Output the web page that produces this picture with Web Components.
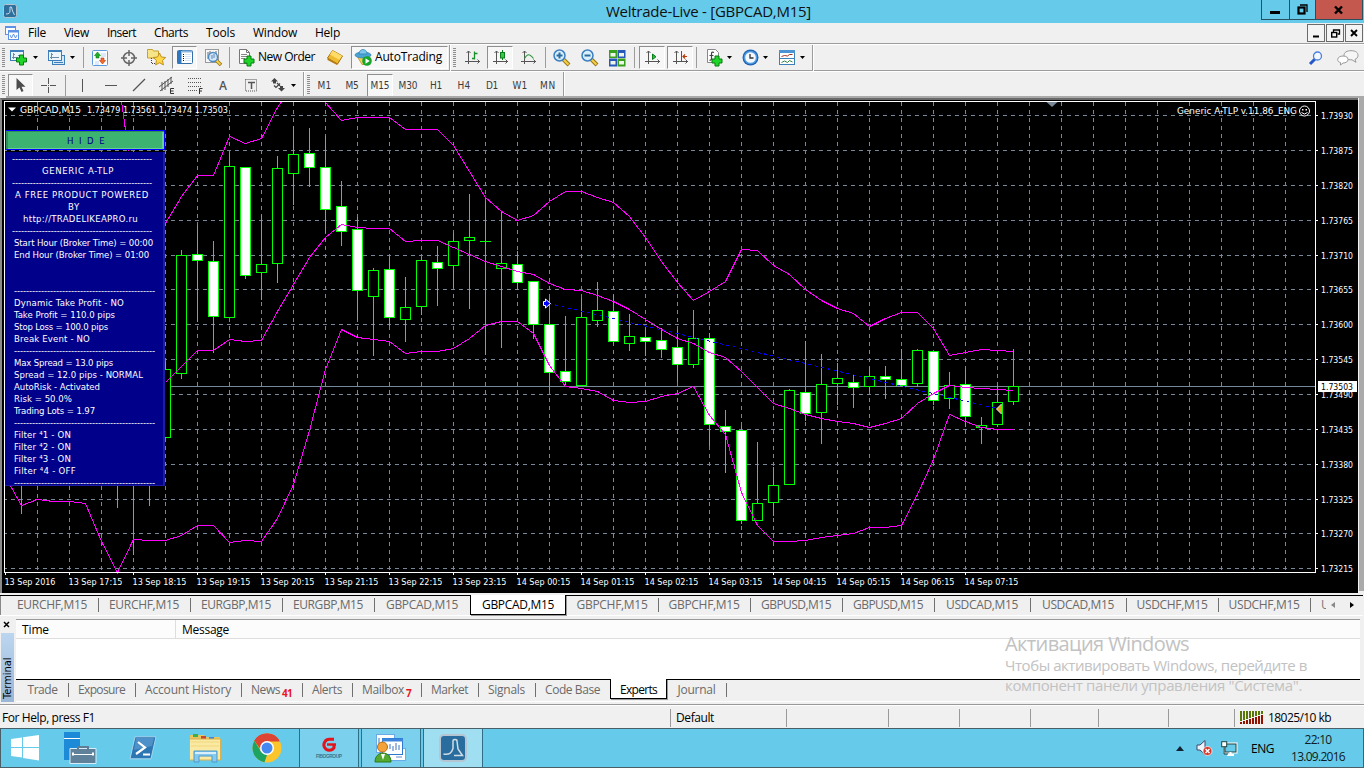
<!DOCTYPE html>
<html lang="en">
<head>
<meta charset="utf-8">
<title>Weltrade-Live - [GBPCAD,M15]</title>
<style>
  html, body { margin: 0; height: 100%; overflow: hidden; }
  body {
    width: 1364px;
    height: 768px;
    background: #f0f0f0;
    color: #000;
    font-family: 'Open Sans', 'Noto Sans', sans-serif;
    font-size: 12px;
  }
</style>
</head>
<body>
<trade-terminal></trade-terminal>

<script>
(function (document, window) {

  const CHART_FONT = "'DejaVu Sans Condensed', 'DejaVu Sans', sans-serif";

  function define(name, css, html, setup) {
    window.customElements.define(name, class extends HTMLElement {
      connectedCallback() {
        if (this.shadowRoot) { return; }
        const root = this.attachShadow({ mode: 'open' });
        const body = typeof html === 'function' ? html(this) : html;
        root.innerHTML = `<style>${css}</style>${body}`;
        if (setup) { setup(this, root); }
      }
    });
  }

  // ---- icons: [width, height, markup] ----
  const axes = '<path d="M3.5 1v13M0 11.500h15M1.500 3l2-2 2 2M12.500 9.500l2 2-2 2" fill="none" stroke="#555"/>';
  const plus = (x, y) => `<path transform="translate(${x} ${y})" d="M3.500 .5h4v3h3v4h-3v3h-4v-3h-3v-4h3z" fill="#1fd428" stroke="#087a10"/>`;
  const lens = sign => `<path d="M10 10l6 6" stroke="#9a7410" stroke-width="4"/><path d="M10 10l5.500 5.500" stroke="#f0ce4a" stroke-width="2.200"/><circle cx="6.500" cy="6.500" r="5.500" fill="#d8effc" stroke="#3b7fc0" stroke-width="1.500"/><path d="${sign}" stroke="#2c6c9c" stroke-width="2"/>`;
  const ICONS = {
    app: [14, 14, '<rect x=".5" y=".5" width="13" height="13" rx="2" fill="#2f6f9c" stroke="#b5c5d0"/><path d="M3 10c3 0 4-1 4-3V3h1.500l1 4 2 4" fill="none" stroke="#c8dcea"/>'],
    doc: [15, 15, '<rect x=".5" y=".5" width="10" height="8" fill="#fff" stroke="#5e92e4"/><path d="M0 1.500h11" stroke="#5e92e4"/><rect x="3.500" y="4.500" width="10" height="9" fill="#fff" stroke="#5e92e4"/><path d="M3 5.500h11" stroke="#5e92e4" stroke-width="2"/><path d="M5 9l1.500 3 2-4 2 4 1.500-3" fill="none" stroke="#5e92e4"/>'],
    newChart: [18, 16, '<rect x=".5" y=".5" width="13" height="10" fill="#eef6fd" stroke="#3c7fba"/><path d="M0 1h14" stroke="#3c7fba" stroke-width="2"/><path d="M3.500 3v6M2 7.500h6M3 4.500h2M8 5.500h3" stroke="#6c8ba6"/>' + plus(6, 4.5)],
    profiles: [18, 16, '<rect x="4.500" y="5.500" width="12" height="9" fill="#d5e8f7" stroke="#3c7fba"/><rect x=".5" y=".5" width="13" height="10" fill="#eef6fd" stroke="#3c7fba"/><path d="M0 1h14" stroke="#3c7fba" stroke-width="2"/><path d="M3.500 3v6M2 7.500h9M3 4.500h2" stroke="#6c8ba6"/><path d="M6 12.500h9" stroke="#3c7fba"/>'],
    market: [16, 16, '<rect x=".5" y=".5" width="15" height="15" rx="1" fill="#fff" stroke="#5a9be0"/><path d="M9 4h5M3 12h4M9 6h5M3 14h4" stroke="#bcd3f2"/><path d="M5.500 2l3 3.500H7V8H4V5.500H2.500z" fill="#1fae28" stroke="#0b7d14" stroke-width=".6"/><path d="M10.500 14l-3-3.500H9V8h3v2.500h1.500z" fill="#f46b2c" stroke="#b8380b" stroke-width=".6"/>'],
    target: [16, 16, '<circle cx="8" cy="8" r="5.500" fill="none" stroke="#666" stroke-width="1.500"/><path d="M8 0v6M8 10v6M0 8h6M10 8h6" stroke="#666" stroke-width="1.500"/>'],
    navigator: [19, 17, '<path d="M.5 2.500v-2h5l1 1.500h5v7h-11z" fill="#f8e488" stroke="#c3a132"/><path d="M4.500 9v6M5 14.500h4" stroke="#444" stroke-dasharray="1 1"/><path d="M12.500 4l1.900 4 4.300.5-3.200 3 .9 4.400-3.900-2.200-3.900 2.200.9-4.400-3.200-3 4.300-.5z" fill="#ffd84a" stroke="#b98812" stroke-width=".9"/>'],
    dataWin: [16, 15, '<rect x=".5" y=".5" width="15" height="13" rx="1" fill="#fff" stroke="#356fa8"/><path d="M2.500 1v13" stroke="#2f78c0" stroke-width="4"/><path d="M5 1.500h10" stroke="#8bb6e0" stroke-width="2"/><path d="M6 4.500h1M6 6.500h1M6 8.500h1M6 10.500h1" stroke="#111"/><path d="M8 4.500h6M8 6.500h6M8 8.500h6M8 10.500h6" stroke="#d6e6f6"/>'],
    tester: [17, 17, '<rect x=".5" y=".5" width="13" height="13" fill="#f7f7f7" stroke="#999"/><path d="M3 3v7M5 2v6M11 2v6" stroke="#667"/><path d="M11 11l5 5" stroke="#9a7410" stroke-width="3.500"/><path d="M11 11l4.500 4.500" stroke="#f0ce4a" stroke-width="2"/><circle cx="8" cy="8" r="4.500" fill="#cfe6fa" fill-opacity=".85" stroke="#4a88c4" stroke-width="1.300"/><path d="M7 6v4M9 5v4" stroke="#5783ad"/>'],
    order: [17, 18, '<path d="M1.500.5h7l3 3v11h-10z" fill="#fff" stroke="#777"/><path d="M8.500.5v3h3" fill="none" stroke="#777"/><path d="M3 5.500h6M3 7.500h6M3 9.500h4" stroke="#888"/>' + plus(5.5, 6.5)],
    gold: [16, 15, '<path d="M.5 8l5-7.500 10 5.500-5 8z" fill="#eebb30" stroke="#a87412"/><path d="M5.500.500l10 5.500-3 4-9.500-5.500z" fill="#ffdc68"/><path d="M.5 8v2l9.500 5 5.500-8.500v-1l-5 8z" fill="#b57b12"/>'],
    auto: [17, 17, '<path d="M2 7l12 0-5 8.500H7z" fill="#f5cf50" stroke="#b08a25" stroke-width=".7"/><ellipse cx="8" cy="6" rx="8" ry="3" fill="#4aa3d6" stroke="#2b7bad" stroke-width=".7"/><path d="M4 5c0-6 8-6 8 0z" fill="#7cc6ec" stroke="#2b7bad" stroke-width=".7"/><circle cx="12" cy="12" r="4.800" fill="#18a52b"/><path d="M10.500 9.300v5.400l4.200-2.700z" fill="#fff"/>'],
    bars: [15, 15, axes + '<path d="M9.500 1.500v8M9.500 3.500h3M7 8.500h3" stroke="#17902a" stroke-width="1.300"/>'],
    candles: [15, 15, axes + '<path d="M9.500 0v10" stroke="#0a7d1b"/><rect x="7.500" y="2.500" width="4" height="5.500" fill="#3cc44c" stroke="#0a7d1b"/>'],
    line: [15, 15, axes + '<path d="M3.500 8.500c3-5 5-5 9 0" fill="none" stroke="#2d9a3c" stroke-width="1.200"/>'],
    zoomIn: [17, 17, lens('M3.500 6.500h6M6.500 3.500v6')],
    zoomOut: [17, 17, lens('M3.500 6.500h6')],
    tile: [17, 16, '<rect width="8" height="8" fill="#38a01c"/><rect x="8.500" width="8" height="8" fill="#2859b8"/><rect y="8.500" width="8" height="8" fill="#2859b8"/><rect x="8.500" y="8.500" width="8" height="8" fill="#38a01c"/><path d="M1.500 3h5v3.500h-5zM10 3h5v3.500h-5zM1.500 11h5v3.500h-5zM10 11h5v3.500h-5z" fill="#eef6ea"/>'],
    scroll: [15, 15, axes + '<path d="M7.500 4v5.500l3.500-2.750z" fill="#2fbd3f" stroke="#0a7d1b"/>'],
    shift: [15, 15, axes + '<path d="M8.500 1v10" stroke="#555"/><path d="M14 6.500h-4M12 4.500l-2 2 2 2" fill="none" stroke="#b8380b" stroke-width="1.200"/>'],
    indicators: [17, 18, '<path d="M1.500.500h8l3 3v10h-11z" fill="#fff" stroke="#888"/><path d="M8 3.500c-2-1-2.500 0-2.500 1.500v4.500c0 1.500-1 2-2 1.500M3.500 6.500h4" fill="none" stroke="#444" stroke-width="1.200"/>' + plus(5.5, 6.5)],
    clock: [17, 17, '<circle cx="8.500" cy="8.500" r="8" fill="#1f62b4"/><circle cx="8.500" cy="8.500" r="6.800" fill="#4f9be0"/><circle cx="8.500" cy="8.500" r="5.300" fill="#f4f8fc"/><path d="M8 5v4h3.500" fill="none" stroke="#333" stroke-width="1.300"/>'],
    template: [17, 16, '<rect x=".5" y=".5" width="15" height="14" fill="#fff" stroke="#3c7fba"/><path d="M0 1.500h16" stroke="#4b94d4" stroke-width="3"/><path d="M1 8.500h14" stroke="#3c7fba"/><path d="M2.500 6.500l3-1 3 .5 2-1.500h3" fill="none" stroke="#a03220"/><path d="M2.500 12.500l3-1.500 3 1.500 2-2 3 1.500" fill="none" stroke="#2d8a3c"/>'],
    drop: [5, 3, '<path d="M0 0h5L2.500 3z" fill="#000"/>'],
    cursor: [10, 15, '<path d="M.5 0v12l3-2.500 2 4.500 2-1-2-4.300h4z" fill="#4c4c4c"/>'],
    cross: [15, 15, '<path d="M7.500 0v6M7.500 9v6M0 7.500h6M9 7.500h6M7 7.500h1" stroke="#555"/>'],
    vline: [3, 13, '<path d="M1.500 0v13" stroke="#555"/>'],
    hline: [12, 3, '<path d="M0 1.500h12" stroke="#555"/>'],
    trend: [12, 12, '<path d="M0 12L12 0" stroke="#555" stroke-width="1.200"/>'],
    channel: [16, 17, '<path d="M0 10L13 0M1 14L14 4M3 5v9M6 4v9M9 2v8M12 0v7" stroke="#555" fill="none"/><path d="M15 11.500h-3.500v5H15M11.500 14h3" stroke="#333" fill="none"/>'],
    fibo: [15, 17, '<path d="M0 1.500h14M0 5.500h14M0 9.500h14M0 13.500h9" stroke="#555" stroke-dasharray="1 1"/><path d="M14.500 11.500h-3V17M11.500 14h2.500" stroke="#333" fill="none"/>'],
    label: [14, 14, '<rect x="1.500" y="1.500" width="11" height="11.500" fill="none" stroke="#555" stroke-dasharray="1 1"/><path d="M4 4.500h7M7.500 4v7" stroke="#555" stroke-width="1.500"/>'],
    arrows: [14, 14, '<path d="M3.500 0l3.500 3.500H5v2H2v-2H0zM10.500 13.500L7 10h2V8h3v2h2z" fill="#444"/><path d="M6 5l3 3M3 7.500l2 2 4-4" fill="none" stroke="#444" stroke-width="1.200"/>'],
    search: [14, 14, '<path d="M6 8L1 13" stroke="#2458c8" stroke-width="3"/><circle cx="8.500" cy="5" r="4" fill="#f2f8ff" stroke="#4b7fe0" stroke-width="1.300"/>'],
    chat: [22, 16, '<path d="M14 .7c5 0 7 2 7 4.600 0 2.200-1.300 3.500-3 4l1 3-4-2.500c-5 .2-8-1.500-8-4.500s3-4.600 7-4.600z" fill="#f6f6f6" stroke="#999"/><path d="M6 6c3.500 0 5 1.500 5 3.500S9 13 6 13l-2.500 2L3.500 12.500C1.500 12 .7 11 .7 9.500.7 7.500 3 6 6 6z" fill="#fff" stroke="#999"/>'],
    bars2: [24, 14, Array.from({ length: 8 }, (_, i) => `<path d="M${i * 3 + 1} 0v${10 - i}" stroke="#587508" stroke-width="2"/><path d="M${i * 3 + 1} ${11 - i}V13" stroke="#941100" stroke-width="2"/>`).join('')],
    windows: [28, 26, '<path d="M0 4l11-1.500V12H0zM12 2.300L28 0v12H12zM0 13h11v9.500L0 21zM12 13h16v12.500L12 23z" fill="#fff"/>'],
    server: [34, 32, '<path d="M0 0h16v28H0z" fill="#1d8ad8"/><path d="M0 6.500h16" stroke="#fff"/><path d="M6 16.500h26v15H6z" fill="#5f8199" stroke="#d7eef8"/><path d="M14 18v-3h10v3" fill="none" stroke="#5f7d94" stroke-width="2"/><path d="M8 22.500h22" stroke="#fff"/><path d="M9 20.500v3M29 20.500v3" stroke="#fff" stroke-width="2"/>'],
    shell: [28, 24, '<path d="M6 .8h21l-5 22H1z" fill="#2d76b4" stroke="#a8d6ee"/><path d="M7 2h18L23 10 5 14z" fill="#62a4d6" opacity=".6"/><path d="M9 6l7 5.500L7 18M14 18.500h7" fill="none" stroke="#fff" stroke-width="2.200"/>'],
    explorer: [33, 30, '<path d="M1 5V2h14l2 2h14v6H1z" fill="#e8c560"/><path d="M4 1h5v3H4z" fill="#3cae4a"/><path d="M12 3h5v3h-5z" fill="#c9462e"/><path d="M20 4h5v3h-5z" fill="#4088d8"/><path d="M.5 6h31v21H.5z" fill="#fae9a2" stroke="#d7b24e"/><path d="M2 9h28M2 13h28" stroke="#f1d67a"/><path d="M5 29V18h23v11h-5v-6H10v6z" fill="#87c9ee" stroke="#4a9aca"/><path d="M6 20h21" stroke="#d8f0fc" stroke-width="2"/>'],
    chrome: [30, 30, '<circle cx="15" cy="15" r="14.500" fill="#fbc52d"/><path d="M15 15L2.400 7.800A14.500 14.500 0 0 1 27.600 7.800H15z" fill="#dd4433"/><path d="M15 .5A14.500 14.500 0 0 1 27.800 8.500H15L9 17 2.400 7.800A14.500 14.500 0 0 1 15 .5z" fill="#dd4433"/><path d="M2.400 7.800L9 18.500l6 3.500-2.500 7.300A14.500 14.500 0 0 1 2.400 7.800z" fill="#1da462"/><circle cx="15" cy="15" r="7" fill="#fff"/><circle cx="15" cy="15" r="5.500" fill="#4688f1"/>'],
    fibogroup: [28, 24, '<path d="M19 3.300h-4.500a5.500 5.500 0 1 0 4.500 8.500V9" fill="none" stroke="#e3141c" stroke-width="3"/><path d="M12 8.500h9" stroke="#e3141c" stroke-width="2.400"/><text x="1" y="22" font-family="Liberation Sans" font-weight="bold" font-size="4.800" textLength="26" fill="#3e7488">FIBOGROUP</text>'],
    trader: [32, 30, '<rect x="1.500" y="1.500" width="18" height="18" fill="#fff" stroke="#69aae8"/><rect x="14.500" y="15.500" width="16" height="12" fill="#fff" stroke="#69aae8"/><rect x="7.500" y="5.500" width="20" height="16" fill="#fff" stroke="#2f79d0"/><path d="M7 7h21" stroke="#3b86dc" stroke-width="3"/><path d="M15 11v5M18 13v5M21 10v7M24 12v5M4 5v7M21 24h6" stroke="#5f8cc8" stroke-width="1.200"/><path d="M0 29c0-12 16-12 16 0z" fill="#53a82e" stroke="#2d7a18"/><path d="M6 21l2 6 2-6z" fill="#fff"/><circle cx="7.500" cy="14" r="5" fill="#f3a33a" stroke="#b96c15"/>'],
    mt4: [28, 28, '<rect x="1" y="1" width="26" height="26" rx="4" fill="#286d9e" stroke="#b5c6d2" stroke-width="2"/><path d="M4.500 20c6 1 8-1 9.500-5.500V7c0-2 4-2 4 0l1 8 4.500 6.500H15" fill="none" stroke="#d0dde6" stroke-width="1.500"/>'],
    tray: [8, 5, '<path d="M0 5h8L4 0z" fill="#123"/>'],
    sound: [17, 16, '<path d="M1 5h3l5-4.500v14L4 10H1z" fill="#e8f5fb" stroke="#446"/><circle cx="11.500" cy="11" r="4.500" fill="#d8352a" stroke="#fff" stroke-width=".7"/><path d="M9.500 9l4 4M13.500 9l-4 4" stroke="#fff" stroke-width="1.500"/>'],
    network: [16, 15, '<rect x="4" y="3" width="11" height="8" fill="#66caea" stroke="#fff" stroke-width="3"/><rect x="4" y="3" width="11" height="8" fill="#66caea" stroke="#244"/><path d="M9.500 11v3M6 14h7" stroke="#fff" stroke-width="2"/><rect x=".7" y=".7" width="5" height="5" fill="#fff" stroke="#244"/><path d="M3 6v7h4" fill="none" stroke="#244"/>'],
    min: [11, 3, '<path d="M0 1.500h10" stroke="#000" stroke-width="3"/>'],
    restore: [11, 11, '<path d="M3 1h7v7" fill="none" stroke="#000" stroke-width="1.300"/><rect x="1.500" y="3.500" width="6" height="6" fill="none" stroke="#000" stroke-width="2.200"/>'],
    close: [9, 8, '<path d="M1 .5l7 7M8 .5l-7 7" stroke="#000" stroke-width="2.400"/>'],
    minS: [7, 9, '<path d="M0 7.500h6" stroke="#000" stroke-width="2"/>'],
    restoreS: [9, 9, '<path d="M2.500 3V1h6v4h-2" fill="none" stroke="#000" stroke-width="1.300"/><rect x=".7" y="3.500" width="5" height="4.500" fill="none" stroke="#000" stroke-width="1.400"/>'],
    closeS: [8, 8, '<path d="M1 1l6 6M7 1L1 7" stroke="#000" stroke-width="1.900"/>'],
    closeXs: [7, 7, '<path d="M1 1l5 5M6 1L1 6" stroke="#000" stroke-width="1.500"/>'],
    left: [4, 6, '<path d="M4 0v6L0 3z" fill="#888"/>'],
    right: [4, 6, '<path d="M0 0v6l4-3z" fill="#000"/>']
  };

  define('ui-icon', ':host { display: block; flex: none; line-height: 0; } svg { display: block; overflow: visible; }', el => {
    const [w, h, markup] = ICONS[el.getAttribute('name')];
    return `<svg width="${w}" height="${h}" viewBox="0 0 ${w} ${h}">${markup}</svg>`;
  });

  // Text run spread over a fixed advance width.
  define('fit-label', ':host { display: block; flex: none; white-space: pre; } span { display: inline-block; }', '<span><slot></slot></span>', (el, root) => {
    const width = parseFloat(el.getAttribute('w'));
    const span = root.querySelector('span');
    const extra = (width - span.getBoundingClientRect().width) / el.textContent.length;
    el.style.width = width + 'px';
    span.style.letterSpacing = extra.toFixed(3) + 'px';
  });

  define('title-bar', `
    :host { display: flex; height: 23px; background: #66caea; position: relative; justify-content: center; }
    ui-icon.app { position: absolute; left: 3px; top: 4px; }
    fit-label { font-size: 15px; line-height: 23px; color: #111; margin-left: 53px; }
    .buttons { position: absolute; right: 1px; top: 0; display: flex; height: 19px; border: 1px solid #285060; border-top: 0; }
    .buttons div { display: flex; align-items: center; justify-content: center; width: 27px; border-left: 1px solid #285060; }
    .buttons div:first-child { border-left: 0; }
    .buttons div:nth-child(1) ui-icon { margin-top: 5px; }
    .buttons div:nth-child(2) { width: 25px; }
    .buttons div:last-child { width: 46px; background: #c4584f; }
    .buttons div:last-child ui-icon { margin-right: 2px; }
  `, `
    <ui-icon class="app" name="app"></ui-icon>
    <fit-label w="205">Weltrade-Live - [GBPCAD,M15]</fit-label>
    <div class="buttons">
      <div><ui-icon name="min"></ui-icon></div><div><ui-icon name="restore"></ui-icon></div><div><ui-icon name="close"></ui-icon></div>
    </div>
  `);

  define('menu-bar', `
    :host { display: flex; align-items: center; height: 20px; border-bottom: 1px solid #9d9d9d; box-shadow: 0 1px #fff; padding-left: 5px; margin-bottom: 1px; }
    .menu { display: flex; gap: 18px; margin-left: 8px; line-height: 20px; flex: 1; }
    .buttons { display: flex; gap: 1px; margin-right: 1px; }
    .buttons div { width: 16px; height: 16px; border: 1px solid #6b6b6b; background: #f4f4f4; display: flex; align-items: center; justify-content: center; }
  `, `
    <ui-icon name="doc"></ui-icon>
    <div class="menu">
      <fit-label w="18">File</fit-label><fit-label w="25">View</fit-label><fit-label w="29">Insert</fit-label><fit-label w="34">Charts</fit-label><fit-label w="29">Tools</fit-label><fit-label w="44">Window</fit-label><fit-label w="25">Help</fit-label>
    </div>
    <div class="buttons">
      <div><ui-icon name="minS"></ui-icon></div><div><ui-icon name="restoreS"></ui-icon></div><div><ui-icon name="closeS"></ui-icon></div>
    </div>
  `);

  define('tool-item', `
    :host { display: flex; flex: none; align-items: center; justify-content: center; height: 24px; box-sizing: border-box; }
    :host([grip])::before { content: ''; width: 3px; height: 20px; background: repeating-linear-gradient(#8d8d8d 0 1px, #f0f0f0 1px 2px); }
    :host([sep])::before { content: ''; width: 1px; height: 21px; background: #9c9c9c; }
    :host([end])::before { content: ''; flex: none; width: 1px; height: 26px; background: #9c9c9c; box-shadow: 1px 0 #fff; }
    :host([pressed]) { background: #f7f7f7; border: 1px solid; border-color: #8f8f8f #fff #fff #8f8f8f; height: 23px; }
  `, '<slot></slot>', el => {
    el.style.width = el.getAttribute('w') + 'px';
    el.style.marginLeft = (el.getAttribute('gap') || 0) + 'px';
  });

  const icon = (name, w, gap, extra) => `<tool-item w="${w}" gap="${gap || 0}" ${extra || ''}><ui-icon name="${name}"></ui-icon></tool-item>`;
  const mark = (kind, w, gap) => `<tool-item ${kind} w="${w}" gap="${gap || 0}"></tool-item>`;
  const toolbarCss = ':host { display: flex; align-items: center; height: 25px; border-bottom: 1px solid #9d9d9d; box-shadow: 0 1px #fff; }';

  define('main-toolbar', toolbarCss + `
    fit-label { line-height: 22px; margin-top: -2px; }
    .rule { flex: 1; }
    .right { display: flex; gap: 14px; margin-right: 5px; align-items: center; }
  `, mark('grip', 7) + icon('newChart', 24) + icon('drop', 9, 0) + icon('profiles', 22, 6) + icon('drop', 9)
    + mark('sep', 13) + icon('market', 20) + icon('target', 37) + icon('navigator', 18) + icon('dataWin', 25, 7, 'pressed')
    + icon('tester', 32) + mark('sep', 1)
    + `<tool-item w="79" gap="7"><ui-icon name="order"></ui-icon><fit-label w="57" style="margin-left:3px">New Order</fit-label></tool-item>`
    + icon('gold', 32, 3)
    + `<tool-item w="97" gap="0" pressed><ui-icon name="auto"></ui-icon><fit-label w="67" style="margin-left:3px;margin-right:2px">AutoTrading</fit-label></tool-item>`
    + mark('end', 3) + mark('grip', 7) + icon('bars', 28) + icon('candles', 26, 1, 'pressed') + icon('line', 31) + mark('sep', 2)
    + icon('zoomIn', 30) + icon('zoomOut', 26) + icon('tile', 30) + mark('sep', 4) + icon('scroll', 26, 3, 'pressed')
    + icon('shift', 26, 2, 'pressed') + mark('sep', 3, 2) + icon('indicators', 22, 5) + icon('drop', 6, 1) + icon('clock', 26, 5)
    + icon('drop', 5) + icon('template', 28, 5) + icon('drop', 5, -1) + mark('end', 4, 5)
    + '<div class="rule"></div><div class="right"><ui-icon name="search"></ui-icon><ui-icon name="chat"></ui-icon></div>');

  define('draw-toolbar', toolbarCss + `
    :host { border-bottom: 0; height: 26px; padding-top: 1px; box-shadow: none; }
    .tf { font: 10px ${CHART_FONT}; color: #3c3c3c; }
    .a { font: 600 12px 'Open Sans', sans-serif; color: #555; }
  `, mark('grip', 7) + icon('cursor', 25, 1, 'pressed') + icon('cross', 30) + mark('sep', 5) + icon('vline', 29) + icon('hline', 28)
    + icon('trend', 28) + icon('channel', 28) + icon('fibo', 28) + '<tool-item w="28" class="a">A</tool-item>' + icon('label', 28)
    + icon('arrows', 26) + icon('drop', 5) + mark('end', 4, 5) + mark('grip', 6)
    + [['M1', 14], ['M5', 13], ['M15', 19], ['M30', 19], ['H1', 12], ['H4', 13], ['D1', 12], ['W1', 15], ['MN', 16]].map(([t, w]) =>
      `<tool-item class="tf" w="${t === 'M15' ? 26 : t === 'M1' ? 27 : 28}" gap="${t === 'M15' || t === 'M30' ? 1 : 0}" ${t === 'M15' ? 'pressed' : ''}><fit-label w="${w}">${t}</fit-label></tool-item>`).join('')
    + mark('end', 3));

  // ---- chart data, plot pixels: x, high, top, bottom, low, filled ----
  const CANDLES = [
    [165, 362, 369, 437, 437, 0], [181, 250, 255, 373, 378, 0], [197, 225, 254, 260, 321, 1], [213, 241, 261, 316, 352, 1],
    [229, 153, 166, 317, 317, 0], [245, 167, 167, 275, 278, 1], [261, 215, 264, 272, 299, 0], [277, 156, 168, 263, 282, 0],
    [293, 126, 154, 173, 204, 0], [309, 128, 153, 167, 186, 1], [325, 136, 167, 209, 232, 1], [341, 181, 206, 231, 245, 1],
    [357, 217, 229, 290, 319, 1], [373, 268, 270, 296, 355, 0], [389, 257, 269, 317, 325, 1], [405, 277, 307, 319, 341, 0],
    [421, 257, 260, 306, 314, 0], [437, 246, 262, 268, 305, 1], [453, 233, 241, 265, 287, 0], [469, 194, 237, 240, 308, 0],
    [485, 201, 241, 241, 355, 0], [501, 211, 263, 268, 347, 0], [517, 251, 264, 282, 289, 1], [533, 281, 281, 324, 338, 1],
    [549, 298, 324, 372, 389, 1], [565, 316, 371, 381, 384, 1], [581, 298, 317, 385, 385, 0], [597, 282, 310, 320, 326, 0],
    [613, 295, 311, 341, 343, 1], [629, 314, 336, 343, 350, 0], [645, 329, 337, 341, 355, 1], [661, 328, 340, 349, 357, 1],
    [677, 330, 347, 364, 381, 1], [693, 310, 338, 364, 367, 0], [709, 333, 338, 424, 445, 1], [725, 410, 426, 431, 472, 1],
    [741, 426, 430, 520, 523, 1], [757, 442, 503, 520, 520, 0], [773, 467, 485, 502, 515, 0], [789, 389, 390, 484, 484, 0],
    [805, 341, 392, 413, 420, 1], [821, 354, 384, 412, 443, 0], [837, 363, 378, 383, 404, 0], [853, 375, 382, 387, 407, 1],
    [869, 367, 376, 386, 391, 0], [885, 366, 376, 379, 398, 1], [901, 349, 379, 385, 385, 1], [917, 349, 350, 383, 386, 0],
    [933, 351, 351, 400, 404, 1], [949, 372, 385, 398, 408, 0], [965, 369, 384, 416, 426, 1], [981, 417, 425, 427, 443, 0],
    [997, 385, 402, 424, 426, 0], [1013, 349, 386, 401, 404, 0]
  ];
  const HIDDEN_WICKS = [[21, 514], [117, 508], [133, 555], [149, 506]];

  const series = (start, values) => values.map((y, i) => `${start + i * 16 + .5},${y + .5}`).join(' ');
  const UPPER_A = '121.500,101 125.500,130 129,151';
  const UPPER_B = series(165, [223, 196, 175, 175, 136, 143, 138, 107]) + ' 282,101';
  const UPPER_C = series(325, [102, 120, 117, 117, 117, 129, 129, 129, 145, 171, 197, 211, 220, 215, 201, 191, 191, 197, 202, 216, 237,
    261, 282, 300, 291, 281, 249, 250, 265, 274, 289, 300, 308, 313, 326, 318, 312, 312, 328, 355, 352, 349, 350, 351]);
  const MIDDLE = series(165, [382, 366, 350, 350, 339, 341, 340, 311, 284, 257, 237, 224, 227, 228, 228, 241, 240, 240, 247, 254, 261, 266,
    271, 274, 283, 289, 290, 295, 301, 309, 319, 329, 338, 343, 352, 357, 371, 387, 403, 408, 414, 418, 421, 423, 427, 423, 418, 403,
    393, 385, 387, 388, 389, 390]);
  const LOWER = '10,485 ' + series(21, [505, 499, 501, 501, 503, 541, 572, 539, 540, 540, 535, 525, 525, 542, 540, 541, 518, 484, 430, 369,
    329, 337, 339, 341, 353, 351, 351, 348, 338, 325, 321, 321, 333, 365, 386, 388, 391, 400, 402, 401, 396, 393, 386, 415, 434, 492,
    525, 541, 541, 540, 537, 535, 533, 527, 527, 525, 494, 459, 414, 421, 427, 429, 429]);

  const PRICES = [['1.73930', 115], ['1.73875', 150], ['1.73820', 185], ['1.73765', 220], ['1.73710', 255], ['1.73655', 289], ['1.73600', 324],
    ['1.73545', 359], ['1.73490', 394], ['1.73435', 429], ['1.73380', 464], ['1.73325', 499], ['1.73270', 533], ['1.73215', 568]];
  const TIMES = ['13 Sep 2016', '13 Sep 17:15', '13 Sep 18:15', '13 Sep 19:15', '13 Sep 20:15', '13 Sep 21:15', '13 Sep 22:15', '13 Sep 23:15',
    '14 Sep 00:15', '14 Sep 01:15', '14 Sep 02:15', '14 Sep 03:15', '14 Sep 04:15', '14 Sep 05:15', '14 Sep 06:15', '14 Sep 07:15'];

  function text(x, y, w, value, fill) {
    return `<text x="${x}" y="${y}" textLength="${w}" lengthAdjust="spacingAndGlyphs" fill="${fill || '#fff'}">${value}</text>`;
  }

  function drawChart() {
    let columns = '';
    let rows = '';
    for (let x = 37; x < 1315; x += 32) { columns += `M${x + .5} 102V572`; }
    PRICES.forEach(([, y]) => { rows += `M5 ${y + .5}H1311`; });

    const candles = CANDLES.map(([x, high, top, bottom, low, filled]) => {
      if (top === bottom) { return `<path d="M${x + .5} ${high}V${low}M${x - 5} ${top + .5}h11"/>`; }
      return `<path d="M${x + .5} ${high}V${top}M${x + .5} ${bottom}V${low + 1}"/><rect x="${x - 4.5}" y="${top + .5}" width="10" height="${bottom - top}" fill="${filled ? '#fff' : '#000'}"/>`;
    }).join('') + HIDDEN_WICKS.map(([x, y]) => `<path d="M${x + .5} 480V${y}"/>`).join('');

    const ticks = PRICES.map(([, y]) => `M1315 ${y + .5}h3`).join('') + TIMES.map((_, i) => `M${5.5 + i * 64} 572v3`).join('');

    return `<svg width="1356" height="493" viewBox="2 100 1356 493">
      <g shape-rendering="crispEdges" fill="none">
        <path d="${columns}" stroke="#778899" stroke-dasharray="4 4"/>
        <path d="${rows}" stroke="#778899" stroke-dasharray="4 4" stroke-dashoffset="2"/>
        <path d="M5 386.500H1315" stroke="#778899"/>
        <g stroke="#00ff00">${candles}</g>
        <g stroke="#ff00ff"><polyline points="${UPPER_A}"/><polyline points="${UPPER_B}"/><polyline points="${UPPER_C}"/><polyline points="${MIDDLE}"/><polyline points="${LOWER}"/></g>
        <path d="M549 303.500L997 408.500" stroke="#0000ff" stroke-dasharray="3 3.500"/>
        <path d="M4.500 101.500H1315.500V572.500H4.500z${ticks}" stroke="#fff"/>
      </g>
      <path d="M543.500 301.500h2v-2.500l5 4.500-5 4.500V305.500h-2z" fill="#0000ff" stroke="#fff"/>
      <path d="M1002 404v10l-5.500-5z" fill="#daa520"/><path d="M1001.500 404l-5 5 5 5" fill="none" stroke="#fff"/>
      <path d="M1046.500 102h11l-5.500 5z" fill="#778899"/>
      <path d="M8 107.500h8l-4 4z" fill="#fff"/>
      <g font-family="${CHART_FONT}" font-size="9.500">
        ${text(20, 113, 61, 'GBPCAD,M15')}${text(87, 113, 141, '1.73479 1.73561 1.73474 1.73503')}
        ${text(1177, 114, 120, 'Generic A-TLP v.11.86_ENG')}
        <circle cx="1304.500" cy="111" r="5" fill="none" stroke="#fff"/><path d="M1302 109h1.500v1.500h-1.500zM1305.500 109h1.500v1.500h-1.500z" fill="#fff"/><path d="M1301.500 112.500q3 3 6 0" fill="none" stroke="#fff"/>
        ${PRICES.map(([p, y]) => text(1321, y + 4, 32, p)).join('')}
        <rect x="1318" y="381" width="39" height="11" fill="#fff"/>${text(1321, 390, 32, '1.73503', '#000')}
        ${TIMES.map((t, i) => text(4.5 + i * 64, 585, i ? 54 : 51, t)).join('')}
      </g>
    </svg>`;
  }

  define('price-chart', `
    :host { display: block; position: relative; height: 493px; background: #000; border: solid #696969; border-width: 2px 0 0 2px; border-left-color: #8b8b8b; box-sizing: content-box; margin-right: 6px; box-shadow: 1px 0 #f4f4f4, 6px -2px #aaa; }
    svg { display: block; width: 1356px; }
    ::slotted(expert-panel) { position: absolute; left: 3px; top: 30px; }
  `, () => drawChart() + '<slot></slot>');

  const RULE = '-'.repeat(47);
  const PANEL = [[RULE, 140, 7], ['GENERIC A-TLP', 72, 37], [RULE, 140, 7], ['A FREE PRODUCT POWERED', 134, 10], ['BY', 12, 63],
    ['http://TRADELIKEAPRO.ru', 115, 18], [RULE, 140, 7], ['Start Hour (Broker Time) = 00:00', 139, 9], ['End Hour (Broker Time) = 01:00', 135, 9],
    null, null, [RULE, 141, 9], ['Dynamic Take Profit - NO', 110, 9], ['Take Profit = 110.0 pips', 101, 9], ['Stop Loss = 100.0 pips', 94, 9],
    ['Break Event - NO', 76, 9], [RULE, 141, 9], ['Max Spread = 13.0 pips', 99, 9], ['Spread = 12.0 pips - NORMAL', 129, 9],
    ['AutoRisk - Activated', 86, 9], ['Risk = 50.0%', 58, 9], ['Trading Lots = 1.97', 81, 9], [RULE, 141, 9],
    ['Filter ⁴1 - ON', 57, 9], ['Filter ⁴2 - ON', 57, 9], ['Filter ⁴3 - ON', 57, 9], ['Filter ⁴4 - OFF', 62, 9], [RULE, 141, 9]];

  define('expert-panel', `
    :host { display: block; width: 160px; font: 9.5px/12px ${CHART_FONT}; color: #fff; }
    .hide { display: flex; justify-content: center; box-sizing: border-box; height: 20px; border: 1px solid #0000ff; background: #3cb371; color: #00008b; box-shadow: inset 2px 1px #2f8f5a, inset -2px -1px #66cf94; line-height: 19px; padding-left: 3px; }
    .body { margin-top: 2px; height: 332px; padding-top: 1px; background: #00008b; border: solid #1c1ca4; border-width: 0 2px 1px 0; width: 158px; overflow: hidden; }
    .row { height: 12px; line-height: 12px; display: flex; }
  `, `
    <div class="hide"><fit-label w="39">H I D E</fit-label></div>
    <div class="body">${PANEL.map(row => `<div class="row">${row ? `<fit-label w="${row[1]}" style="margin-left:${row[2]}px">${row[0]}</fit-label>` : ''}</div>`).join('')}</div>
  `);

  const CHART_TABS = [['EURCHF,M15', 92, 70], ['EURCHF,M15', 92, 70], ['EURGBP,M15', 92, 70], ['EURGBP,M15', 92, 70], ['GBPCAD,M15', 96, 72, 'n'],
    ['GBPCAD,M15', 96, 72, 'on'], ['GBPCHF,M15', 92, 71], ['GBPCHF,M15', 92, 71], ['GBPUSD,M15', 92, 70], ['GBPUSD,M15', 92, 70],
    ['USDCAD,M15', 96, 72], ['USDCAD,M15', 96, 72], ['USDCHF,M15', 92, 71], ['USDCHF,M15', 92, 71]];
  const TERMINAL_TABS = [['Trade', 51, 30], ['Exposure', 67, 47], ['Account History', 106, 86], ['News', 61, 29, '', '41'], ['Alerts', 50, 30],
    ['Mailbox', 69, 42, '', '7'], ['Market', 57, 37], ['Signals', 57, 37], ['Code Base', 75, 55, 'n'], ['Experts', 57, 37, 'on'], ['Journal', 59, 38]];

  const tabCss = `
    .tab { position: relative; flex: none; display: flex; justify-content: center; box-sizing: border-box; color: #6a6a6a; }
    .tab::after { content: ''; position: absolute; right: -1px; top: 2px; height: 14px; width: 1px; background: #707070; }
    .tab.n::after, .tab.on::after { display: none; }
    .tab.on { background: #fff; color: #000; border: 1px solid #000; border-top: 0; box-shadow: 1px 1px #999; margin-top: -1px; padding-top: 1px; }
    .badge { color: #e8141e; font-size: 10px; font-weight: bold; margin: 4px 0 0 2px; line-height: 16px; }
  `;
  const tab = ([label, cell, w, cls, badge]) => `<div class="tab ${cls || ''}" style="width:${cell}px"><fit-label w="${w}">${label}</fit-label>${badge ? `<fit-label class="badge" w="${badge.length * 5}">${badge}</fit-label>` : ''}</div>`;

  define('chart-tabs', tabCss + `
    :host { display: flex; height: 19px; margin-top: 2px; border-top: 1px solid #000; padding-left: 6px; line-height: 18px; box-shadow: inset 1px 0 #888; border-bottom: 1px solid #fff; margin-right: 1px; }
    .more { width: 5px; overflow: hidden; margin-left: 11px; color: #777; }
    .nav { display: flex; gap: 15px; align-items: center; margin-left: 5px; height: 18px; }
  `, CHART_TABS.map(tab).join('') + '<div class="more">U</div><div class="nav"><ui-icon name="left"></ui-icon><ui-icon name="right"></ui-icon></div>');

  define('terminal-window', tabCss + `
    :host { display: flex; height: 84px; margin-top: 3px; }
    .side { width: 15px; flex: none; display: flex; flex-direction: column; align-items: center; }
    .side ui-icon { margin: 2px 2px 5px 0; }
    .caption { width: 13px; height: 69px; background: linear-gradient(#9ab6d6, #bcd6f0); writing-mode: vertical-rl; transform: rotate(180deg); line-height: 13px; display: flex; }
    .caption span { margin-top: 3px; letter-spacing: 0; font-family: 'DejaVu Sans Condensed', sans-serif; font-size: 11px; }
    .main { width: 1344px; margin-left: 1px; display: flex; flex-direction: column; border-top: 1px solid #999; }
    .head { display: flex; height: 18px; line-height: 20px; background: #fcfcfc; border-bottom: 1px solid #dedede; }
    .head div { box-sizing: border-box; padding-left: 6px; }
    .head div:first-child { width: 160px; border-right: 1px solid #dedede; }
    .list { height: 40px; background: #fff; border-bottom: 1px solid #000; }
    .tabs { display: flex; height: 20px; line-height: 17px; padding: 1px 0 0 1px; border-bottom: 1px solid #fff; }
    .tabs .tab { height: 17px; }
    .tabs .tab.on { margin-top: -2px; padding-top: 2px; height: 20px; }
  `, `
    <div class="side"><ui-icon name="closeXs"></ui-icon><div class="caption"><span>Terminal</span></div></div>
    <div class="main">
      <div class="head"><div><fit-label w="27">Time</fit-label></div><div><fit-label w="47">Message</fit-label></div></div>
      <div class="list"></div>
      <div class="tabs">${TERMINAL_TABS.map(tab).join('')}</div>
    </div>
  `);

  define('status-bar', `
    :host { display: flex; height: 23px; margin-top: 1px; border-top: 1px solid #999; box-shadow: inset 0 1px #fff; }
    div { box-sizing: border-box; flex: none; display: flex; border-left: 1px solid #9a9a9a; height: 18px; margin-top: 4px; padding-left: 5px; line-height: 18px; }
    .help { border: 0; padding-left: 2px; width: 670px; }
    ui-icon { margin: 2px 4px 0 0; }
  `, `
    <div class="help"><fit-label w="93">For Help, press F1</fit-label></div>
    <div style="width:116px"><fit-label w="38">Default</fit-label></div>
    <div style="width:102px"></div><div style="width:71px"></div><div style="width:71px"></div><div style="width:68px"></div><div style="width:70px"></div><div style="width:66px"></div>
    <div><ui-icon name="bars2"></ui-icon><fit-label w="63">18025/10 kb</fit-label></div>
  `);

  define('task-button', `
    :host { display: flex; flex: none; align-items: center; justify-content: center; box-sizing: border-box; height: 38px; }
    :host([open]) { background: #7ad0ed; border: 1px solid #2e6f87; border-width: 0 1px; }
    :host([active]) { background: #a0def2; border: 1px solid #2e6f87; border-width: 0 1px; }
  `, '<slot></slot>', el => { el.style.width = el.getAttribute('w') + 'px'; });

  define('task-bar', `
    :host { display: flex; height: 38px; background: #66caea; border: 1px solid #4b5f68; box-sizing: content-box; align-items: center; }
    .space { flex: 1; }
    .tray { display: flex; align-items: center; gap: 12px; }
    .clock { display: flex; flex-direction: column; align-items: center; width: 56px; line-height: 17px; margin: 0 17px 0 4px; color: #101c20; }
  `, `
    <task-button w="48"><ui-icon name="windows"></ui-icon></task-button>
    <task-button w="64"><ui-icon name="server"></ui-icon></task-button>
    <task-button w="60"><ui-icon name="shell"></ui-icon></task-button>
    <task-button w="65"><ui-icon name="explorer"></ui-icon></task-button>
    <task-button w="57"><ui-icon name="chrome"></ui-icon></task-button>
    <task-button w="60" open style="margin-left:4px"><ui-icon name="fibogroup"></ui-icon></task-button>
    <task-button w="60" open style="margin-left:2px"><ui-icon name="trader"></ui-icon></task-button>
    <task-button w="60" active style="margin-left:2px"><ui-icon name="mt4"></ui-icon></task-button>
    <div class="space"></div>
    <div class="tray">
      <ui-icon name="tray"></ui-icon><ui-icon name="sound"></ui-icon><ui-icon name="network" style="margin-left:-4px"></ui-icon>
      <fit-label w="23" style="margin-left:2px">ENG</fit-label>
      <div class="clock"><fit-label w="27">22:10</fit-label><fit-label w="54">13.09.2016</fit-label></div>
    </div>
  `);

  define('activation-note', `
    :host { position: absolute; left: 1005px; top: 632px; color: #c2c2c2; font-size: 15px; line-height: 20px; }
    .title { font-size: 20px; line-height: 23px; }
  `, `
    <fit-label class="title" w="184">Активация Windows</fit-label>
    <fit-label w="302">Чтобы активировать Windows, перейдите в</fit-label>
    <fit-label w="297">компонент панели управления "Система".</fit-label>
  `);

  define('trade-terminal', `
    :host { display: flex; flex-direction: column; width: 1364px; height: 768px; position: relative; overflow: hidden; background: #f0f0f0; }
    title-bar, menu-bar, main-toolbar, draw-toolbar, price-chart, chart-tabs, terminal-window, status-bar, task-bar { flex: none; }
  `, `
    <title-bar></title-bar>
    <menu-bar></menu-bar>
    <main-toolbar></main-toolbar>
    <draw-toolbar></draw-toolbar>
    <price-chart><expert-panel></expert-panel></price-chart>
    <chart-tabs></chart-tabs>
    <terminal-window></terminal-window>
    <status-bar></status-bar>
    <task-bar></task-bar>
    <activation-note></activation-note>
  `);
})(document, window);
</script>
</body>
</html>
